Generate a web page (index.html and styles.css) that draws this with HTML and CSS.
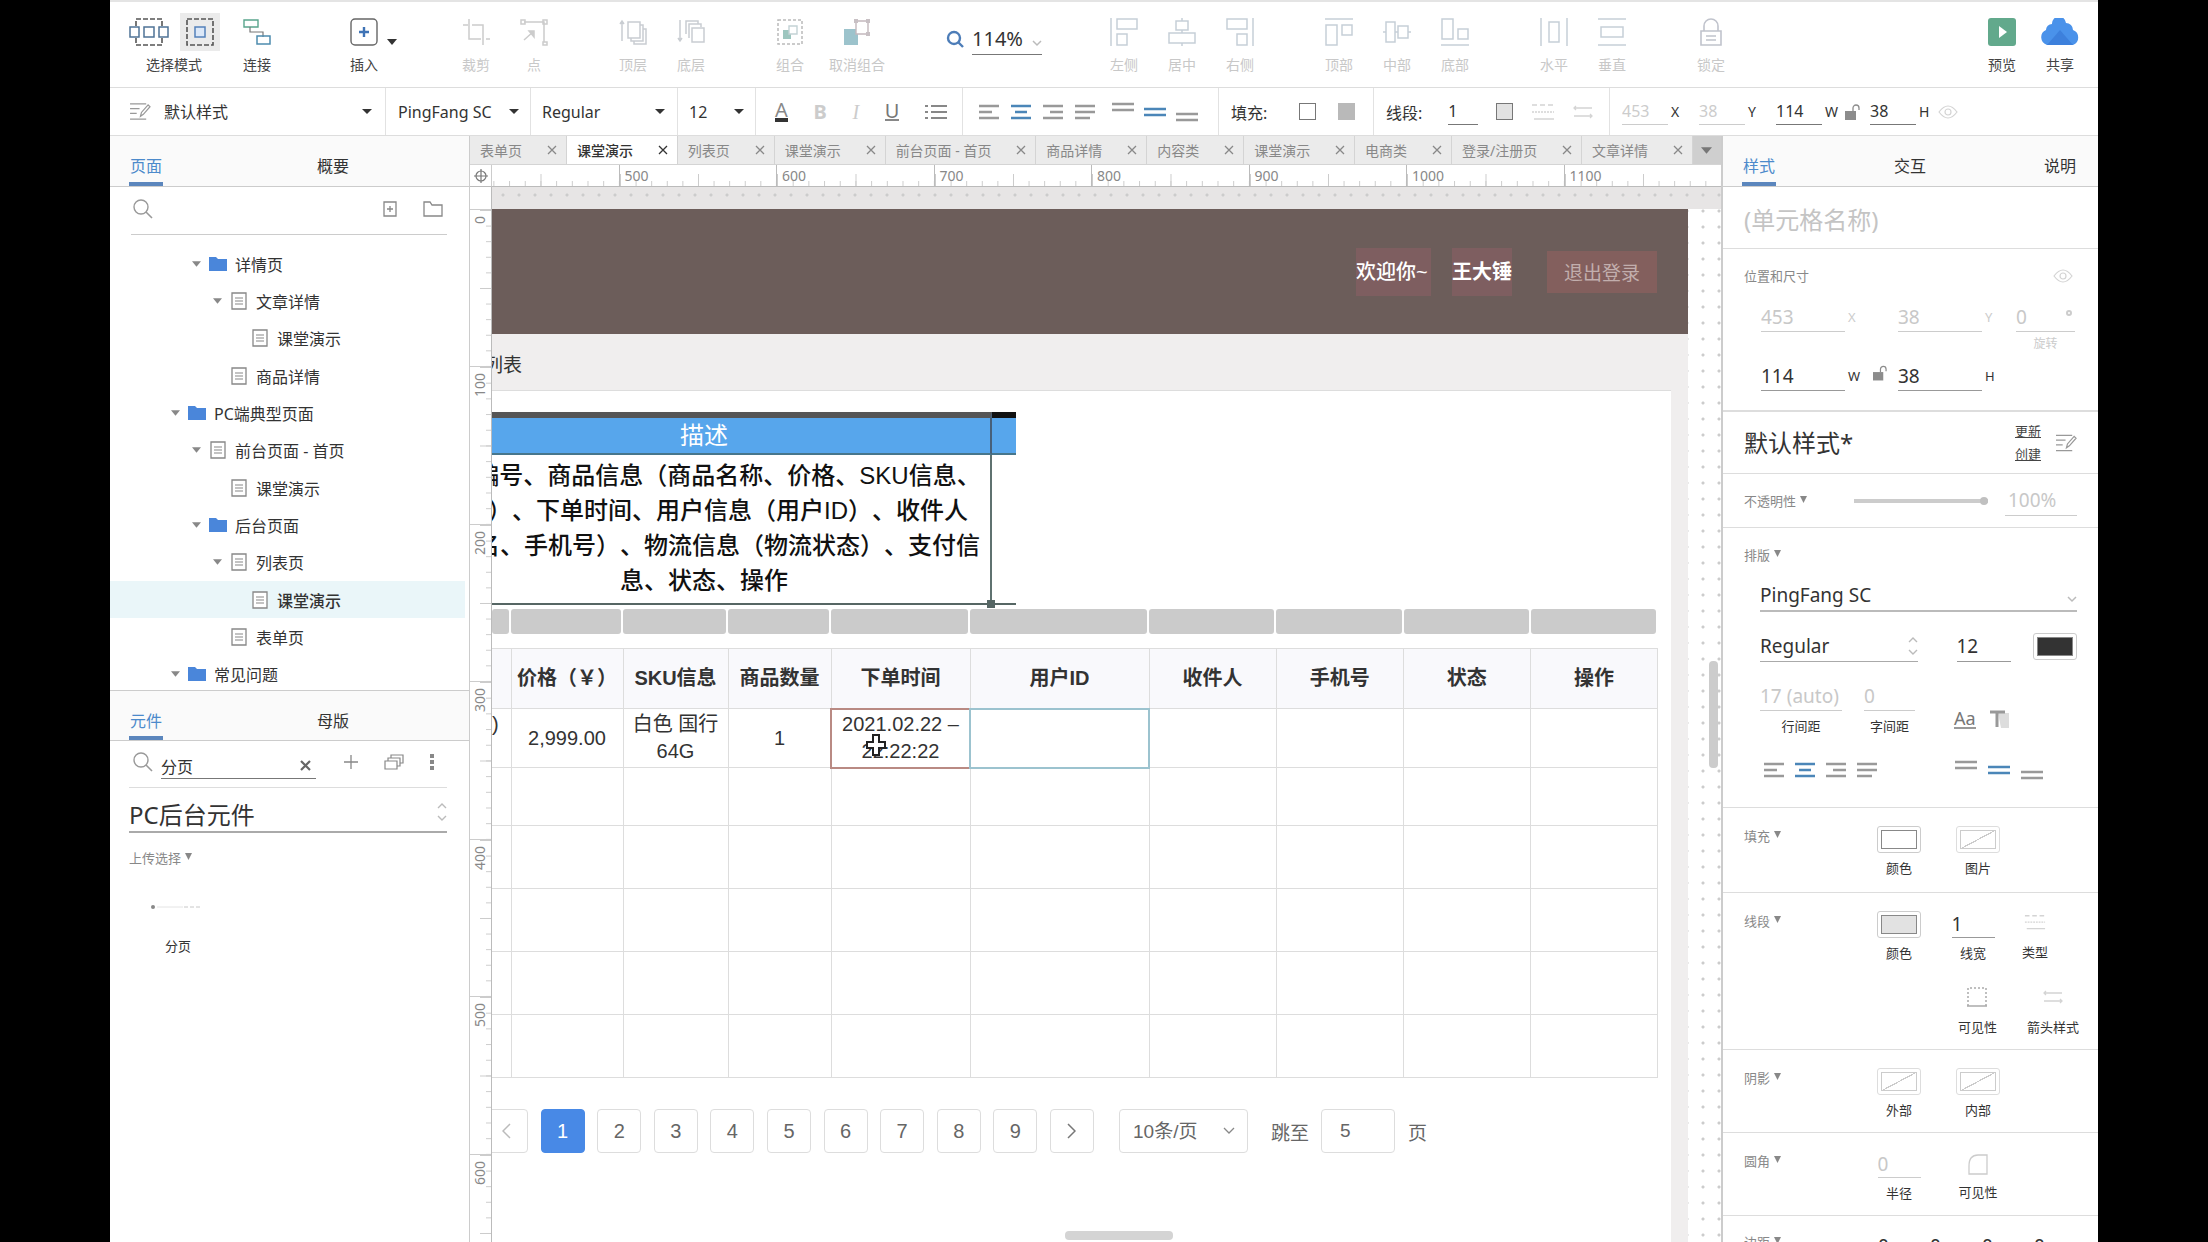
FILE: index.html
```html
<!DOCTYPE html>
<html lang="zh-CN">
<head>
    <meta charset="UTF-8">
    <meta name="viewport" content="width=device-width, initial-scale=1.0">
    <title>课堂演示</title>
    <link rel="stylesheet" href="styles.css">
</head>
<body>
    <!-- Shared icons -->
    <svg class="sprite" aria-hidden="true">
        <symbol id="i-close" viewBox="0 0 10 10"><path d="M1 1l8 8M9 1L1 9" fill="none" stroke="currentColor" stroke-width="1.3"/></symbol>
        <symbol id="i-search" viewBox="0 0 20 20"><circle cx="8" cy="8" r="7" fill="none" stroke="currentColor" stroke-width="1.4"/><path d="M13 13l6 6" stroke="currentColor" stroke-width="1.6"/></symbol>
        <symbol id="i-arrow" viewBox="0 0 10 8"><path d="M0 1h10L5 7z" fill="currentColor"/></symbol>
        <symbol id="i-mini" viewBox="0 0 8 8"><path d="M0 0h8L4 8z" fill="currentColor"/></symbol>
        <symbol id="i-folder" viewBox="0 0 18 16"><path d="M0 1h7l2 2h9v12H0z" fill="#4a86da"/></symbol>
        <symbol id="i-page" viewBox="0 0 16 18"><path d="M1 1h14v16H1z" fill="#fff" stroke="#888" stroke-width="1.3"/><path d="M4 6h8M4 9h8M4 12h8" stroke="#888" stroke-width="1.2"/></symbol>
        <symbol id="i-edit" viewBox="0 0 22 20"><path d="M0 2h17M0 7h10M0 12h7M0 18h17M11 15l1-4 7-8 2 2-7 8z" fill="none" stroke="currentColor" stroke-width="1.3"/></symbol>
        <symbol id="i-left" viewBox="0 0 20 16"><path d="M0 2h20M0 8h13M0 14h20" stroke="currentColor" stroke-width="2.4"/></symbol>
        <symbol id="i-center" viewBox="0 0 20 16"><path d="M0 2h20M4 8h12M0 14h20" stroke="currentColor" stroke-width="2.4"/></symbol>
        <symbol id="i-right" viewBox="0 0 20 16"><path d="M0 2h20M7 8h13M0 14h20" stroke="currentColor" stroke-width="2.4"/></symbol>
        <symbol id="i-justify" viewBox="0 0 20 16"><path d="M0 2h20M0 8h20M0 14h15" stroke="currentColor" stroke-width="2.4"/></symbol>
        <symbol id="i-vtop" viewBox="0 0 22 20"><path d="M0 2h22M0 8h22" stroke="currentColor" stroke-width="2.4"/></symbol>
        <symbol id="i-vmid" viewBox="0 0 22 20"><path d="M0 7h22M0 13h22" stroke="currentColor" stroke-width="2.4"/></symbol>
        <symbol id="i-vbot" viewBox="0 0 22 20"><path d="M0 12h22M0 18h22" stroke="currentColor" stroke-width="2.4"/></symbol>
        <symbol id="i-unlock" viewBox="0 0 15 16"><path d="M0 7h11v9H0z" fill="#8c8c8c"/><path d="M8 7V4a3 3 0 0 1 6 0v2" fill="none" stroke="#8c8c8c" stroke-width="1.3"/></symbol>
        <symbol id="i-eye" viewBox="0 0 20 14"><path d="M1 7q9-12 18 0q-9 12-18 0z" fill="none" stroke="currentColor" stroke-width="1.2"/><circle cx="10" cy="7" r="3" fill="none" stroke="currentColor" stroke-width="1.2"/></symbol>
        <symbol id="i-lines" viewBox="0 0 24 18"><path d="M1 2h22" stroke="currentColor" stroke-width="1.5" stroke-dasharray="5 3"/><path d="M1 9h22" stroke="currentColor" stroke-width="1.5" stroke-dasharray="2 1"/><path d="M3 16h20" stroke="currentColor" stroke-width="1.5"/></symbol>
        <symbol id="i-arrows" viewBox="0 0 20 14"><path d="M1 3h18M1 11h18M3 1L1 3l2 2M17 9l2 2-2 2" fill="none" stroke="currentColor" stroke-width="1.3"/></symbol>
        <symbol id="i-updown" viewBox="0 0 10 18"><path d="M1 5l4-4 4 4M1 13l4 4 4-4" fill="none" stroke="#bbb" stroke-width="1.4"/></symbol>
    </svg>

    <div class="app">
        <header class="toolbar">
            <div class="tool tool-select">
                <div class="tool-pair">
                    <button type="button" class="icon-btn" aria-label="相交选中"><svg width="40" height="28" viewBox="0 0 40 28" fill="none"><path d="M7 8V1h26v7M7 20v7h26v-7" stroke="#555" stroke-width="1.6" stroke-dasharray="5 2"/><path d="M1 9h9v10H1zM15 9h10v10H15zM30 9h9v10h-9z" stroke="#4f7396" stroke-width="1.5"/></svg></button>
                    <button type="button" class="icon-btn is-on" aria-label="包含选中"><svg width="28" height="28" viewBox="0 0 28 28" fill="none"><path d="M1 1h26v26H1z" stroke="#555" stroke-width="1.6" stroke-dasharray="5 2"/><path d="M9 9h10v10H9z" fill="#dce8f8" stroke="#5481bb" stroke-width="1.5"/></svg></button>
                </div>
                <span>选择模式</span>
            </div>
            <button type="button" class="tool tool-link"><svg width="28" height="28" viewBox="0 0 28 28" fill="none"><path d="M1 2h14v7H1z" stroke="#5aa58d" stroke-width="1.4"/><path d="M7 9v5h13v5" stroke="#777" stroke-width="1.2"/><path d="M14 18h13v8H14z" stroke="#4e8cae" stroke-width="1.5"/></svg><span>连接</span></button>
            <button type="button" class="tool tool-insert"><svg width="28" height="28" viewBox="0 0 28 28" fill="none"><rect x="1" y="1" width="26" height="26" rx="4" stroke="#666" stroke-width="1.4"/><path d="M14 9v10M9 14h10" stroke="#3f73b5" stroke-width="2.4"/></svg><span>插入</span><svg class="caret" width="10" height="8"><use href="#i-arrow"/></svg></button>
            <div class="tool-group">
                <button type="button" class="tool" disabled><svg width="28" height="28" viewBox="0 0 28 28" fill="none" stroke="#ccc" stroke-width="1.5"><path d="M7 1v20h12M1 7h5M10 7h11v20M24 21h4"/></svg><span>裁剪</span></button>
                <button type="button" class="tool" disabled><svg width="28" height="28" viewBox="0 0 28 28" fill="none" stroke="#ccc" stroke-width="1.5"><path d="M4 4h20v20M1 2h4v4H1zM23 2h4v4h-4zM23 24h4v3h-4z"/><path d="M4 22l10-9M9 13h5v6z" fill="#ccc"/></svg><span>点</span></button>
            </div>
            <div class="tool-group">
                <button type="button" class="tool" disabled><svg width="28" height="28" viewBox="0 0 28 28" fill="none" stroke="#c9cdd2" stroke-width="1.5"><path d="M3 23V3M1 6l2-3 2 3M9 4h12v16H9zM12 20v3h12V7h-3M15 23v3h12V11h-3"/></svg><span>顶层</span></button>
                <button type="button" class="tool" disabled><svg width="28" height="28" viewBox="0 0 28 28" fill="none" stroke="#c9cdd2" stroke-width="1.5"><path d="M3 2v21M1 20l2 3 2-3M15 10h12v14H15zM12 20V6h12v3M9 16V3h12v3"/></svg><span>底层</span></button>
            </div>
            <div class="tool-group">
                <button type="button" class="tool" disabled><svg width="28" height="28" viewBox="0 0 28 28" fill="none"><path d="M2 2h24v24H2z" stroke="#bbb" stroke-width="1.5" stroke-dasharray="3 2"/><path d="M7 12h8v9H7z" fill="#9dc6bf"/><path d="M13 8h8v8h-8z" fill="#fff" stroke="#c3d2d5" stroke-width="1.4"/></svg><span>组合</span></button>
                <button type="button" class="tool tool-ungroup" disabled><svg width="28" height="28" viewBox="0 0 28 28" fill="none"><path d="M1 11h14v16H1z" fill="#9cc3cc"/><path d="M13 3h12v13H13z" fill="#fff" stroke="#c3b8bd" stroke-width="1.4"/><path d="M11 1h4v4h-4zM23 1h4v4h-4zM23 14h4v4h-4z" fill="#c8c0c4"/></svg><span>取消组合</span></button>
            </div>
            <div class="zoom">
                <svg width="18" height="18" viewBox="0 0 18 18" fill="none" stroke="#4d7db8" stroke-width="2.4"><circle cx="8" cy="8" r="6"/><path d="M12 12l5 5"/></svg>
                <select class="zoom-select" aria-label="缩放"><option>114%</option></select>
            </div>
            <div class="tool-group">
                <button type="button" class="tool" disabled><svg width="28" height="28" viewBox="0 0 28 28" fill="none" stroke="#c6cfd8" stroke-width="1.5"><path d="M1 0v28M7 1h20v10H7zM7 16h10v11H7z"/></svg><span>左侧</span></button>
                <button type="button" class="tool" disabled><svg width="28" height="28" viewBox="0 0 28 28" fill="none" stroke="#c6cfd8" stroke-width="1.5"><path d="M14 0v3M14 12v3M14 25v3M8 3h12v9H8zM1 15h26v10H1z"/></svg><span>居中</span></button>
                <button type="button" class="tool" disabled><svg width="28" height="28" viewBox="0 0 28 28" fill="none" stroke="#c6cfd8" stroke-width="1.5"><path d="M27 0v28M1 1h20v10H1zM11 16h10v11H11z"/></svg><span>右侧</span></button>
            </div>
            <div class="tool-group">
                <button type="button" class="tool" disabled><svg width="28" height="28" viewBox="0 0 28 28" fill="none" stroke="#c6cfd8" stroke-width="1.5"><path d="M0 1h28M1 7h11v20H1zM17 7h10v10H17z"/></svg><span>顶部</span></button>
                <button type="button" class="tool" disabled><svg width="28" height="28" viewBox="0 0 28 28" fill="none" stroke="#c6cfd8" stroke-width="1.5"><path d="M0 14h3M12 14h3M25 14h3M3 4h9v20H3zM15 8h10v12H15z"/></svg><span>中部</span></button>
                <button type="button" class="tool" disabled><svg width="28" height="28" viewBox="0 0 28 28" fill="none" stroke="#c6cfd8" stroke-width="1.5"><path d="M0 27h28M1 1h11v20H1zM17 11h10v10H17z"/></svg><span>底部</span></button>
            </div>
            <div class="tool-group">
                <button type="button" class="tool" disabled><svg width="28" height="28" viewBox="0 0 28 28" fill="none" stroke="#c6cfd8" stroke-width="1.5"><path d="M1 0v28M27 0v28M9 4h10v20H9z"/></svg><span>水平</span></button>
                <button type="button" class="tool" disabled><svg width="28" height="28" viewBox="0 0 28 28" fill="none" stroke="#c6cfd8" stroke-width="1.5"><path d="M0 1h28M0 27h28M3 9h22v10H3z"/></svg><span>垂直</span></button>
            </div>
            <div class="tool-group">
                <button type="button" class="tool" disabled><svg width="28" height="28" viewBox="0 0 28 28" fill="none" stroke="#c0c3cc" stroke-width="1.6"><path d="M4 13h20v14H4zM7 13V8a7 7 0 0 1 14 0v5M9 18h10M9 22h10"/></svg><span>锁定</span></button>
            </div>
            <div class="tool-group tool-end">
                <button type="button" class="tool"><svg width="28" height="28" viewBox="0 0 28 28"><rect width="28" height="28" rx="3" fill="#62a98c"/><path d="M11 8l8 6-8 6z" fill="#fff"/></svg><span>预览</span></button>
                <button type="button" class="tool"><svg width="42" height="28" viewBox="0 0 42 28"><path d="M8 27a8 8 0 0 1-1-15 6 6 0 0 1 6-6 7 7 0 0 1 14-1 7 7 0 0 1 7 7 8 8 0 0 1 0 15z" fill="#4a92ea"/><path d="M8 27l13-15 13 15z" fill="#3d80dc"/></svg><span>共享</span></button>
            </div>
        </header>

        <div class="stylebar">
            <div class="bar-group bar-style">
                <svg class="gray" width="21" height="19"><use href="#i-edit"/></svg>
                <select class="bar-select" aria-label="样式"><option>默认样式</option></select>
            </div>
            <div class="bar-group bar-font"><select class="bar-select" aria-label="字体"><option>PingFang SC</option></select></div>
            <div class="bar-group bar-weight"><select class="bar-select" aria-label="字重"><option>Regular</option></select></div>
            <div class="bar-group bar-size"><select class="bar-select" aria-label="字号"><option>12</option></select></div>
            <div class="bar-group bar-text">
                <button type="button" class="icon-btn glyph-color" aria-label="颜色">A</button>
                <button type="button" class="icon-btn glyph-off" disabled><b>B</b></button>
                <button type="button" class="icon-btn glyph-off" disabled><i>I</i></button>
                <button type="button" class="icon-btn glyph-line">U</button>
                <button type="button" class="icon-btn" aria-label="列表"><svg width="22" height="16" viewBox="0 0 22 16"><path d="M0 2h3M0 8h3M0 14h3M6 2h16M6 8h16M6 14h16" stroke="#888" stroke-width="2.2"/></svg></button>
            </div>
            <div class="bar-group bar-align">
                <button type="button" class="icon-btn" aria-label="左对齐"><svg width="20" height="16"><use href="#i-left"/></svg></button>
                <button type="button" class="icon-btn blue" aria-label="居中"><svg width="20" height="16"><use href="#i-center"/></svg></button>
                <button type="button" class="icon-btn" aria-label="右对齐"><svg width="20" height="16"><use href="#i-right"/></svg></button>
                <button type="button" class="icon-btn" aria-label="两端对齐"><svg width="20" height="16"><use href="#i-justify"/></svg></button>
                <div class="bar-valign">
                    <button type="button" class="icon-btn" aria-label="顶部"><svg width="22" height="20"><use href="#i-vtop"/></svg></button>
                    <button type="button" class="icon-btn blue" aria-label="中部"><svg width="22" height="20"><use href="#i-vmid"/></svg></button>
                    <button type="button" class="icon-btn" aria-label="底部"><svg width="22" height="20"><use href="#i-vbot"/></svg></button>
                </div>
            </div>
            <div class="bar-group bar-fill">
                <span>填充:</span>
                <button type="button" class="chip chip-fill" aria-label="填充颜色"></button>
                <button type="button" class="chip chip-shadow" aria-label="阴影"></button>
            </div>
            <div class="bar-group bar-line">
                <label for="bar-line">线段:</label>
                <input id="bar-line" class="line-input w30" value="1">
                <button type="button" class="chip chip-line" aria-label="线段颜色"></button>
                <button type="button" class="icon-btn faint" aria-label="类型"><svg width="24" height="18"><use href="#i-lines"/></svg></button>
                <button type="button" class="icon-btn faint" aria-label="箭头样式"><svg width="20" height="14"><use href="#i-arrows"/></svg></button>
            </div>
            <div class="bar-group bar-pos">
                <input id="bar-x" class="line-input w46" value="453" disabled><label for="bar-x">X</label>
                <input id="bar-y" class="line-input w46" value="38" disabled><label for="bar-y">Y</label>
                <input id="bar-w" class="line-input w46" value="114"><label for="bar-w">W</label>
                <svg class="bar-lock" width="15" height="16"><use href="#i-unlock"/></svg>
                <input id="bar-h" class="line-input w46" value="38"><label for="bar-h">H</label>
                <svg class="faint" width="20" height="14"><use href="#i-eye"/></svg>
            </div>
        </div>

        <main class="workspace">
            <aside class="side side-left">
                <nav class="panel-tabs">
                    <button type="button" class="panel-tab active">页面</button>
                    <button type="button" class="panel-tab">概要</button>
                </nav>
                <div class="page-search">
                    <svg class="gray" width="20" height="20"><use href="#i-search"/></svg>
                    <button type="button" class="icon-btn push" aria-label="添加页面"><svg width="14" height="16" viewBox="0 0 14 16" fill="none" stroke="#888" stroke-width="1.3"><path d="M1 1h12v14H1zM7 5v6M4 8h6"/></svg></button>
                    <button type="button" class="icon-btn" aria-label="添加文件夹"><svg width="20" height="16" viewBox="0 0 20 16" fill="none" stroke="#888" stroke-width="1.3"><path d="M1 1h6l2 3h10v11H1z"/></svg></button>
                </div>
                <div class="tree-box">
                    <ul class="tree">
                        <li class="lv2"><svg class="twist"><use href="#i-arrow"/></svg><svg class="node"><use href="#i-folder"/></svg>详情页</li>
                        <li class="lv3"><svg class="twist"><use href="#i-arrow"/></svg><svg class="node"><use href="#i-page"/></svg>文章详情</li>
                        <li class="lv4"><i class="twist"></i><svg class="node"><use href="#i-page"/></svg>课堂演示</li>
                        <li class="lv3"><i class="twist"></i><svg class="node"><use href="#i-page"/></svg>商品详情</li>
                        <li class="lv1"><svg class="twist"><use href="#i-arrow"/></svg><svg class="node"><use href="#i-folder"/></svg>PC端典型页面</li>
                        <li class="lv2"><svg class="twist"><use href="#i-arrow"/></svg><svg class="node"><use href="#i-page"/></svg>前台页面 - 首页</li>
                        <li class="lv3"><i class="twist"></i><svg class="node"><use href="#i-page"/></svg>课堂演示</li>
                        <li class="lv2"><svg class="twist"><use href="#i-arrow"/></svg><svg class="node"><use href="#i-folder"/></svg>后台页面</li>
                        <li class="lv3"><svg class="twist"><use href="#i-arrow"/></svg><svg class="node"><use href="#i-page"/></svg>列表页</li>
                        <li class="lv4 selected"><i class="twist"></i><svg class="node"><use href="#i-page"/></svg>课堂演示</li>
                        <li class="lv3"><i class="twist"></i><svg class="node"><use href="#i-page"/></svg>表单页</li>
                        <li class="lv1"><svg class="twist"><use href="#i-arrow"/></svg><svg class="node"><use href="#i-folder"/></svg>常见问题</li>
                    </ul>
                </div>
                <nav class="panel-tabs panel-tabs-lower">
                    <button type="button" class="panel-tab active">元件</button>
                    <button type="button" class="panel-tab">母版</button>
                </nav>
                <div class="lib-search">
                    <svg class="gray" width="20" height="20"><use href="#i-search"/></svg>
                    <div class="lib-query">
                        <input type="text" value="分页" aria-label="搜索元件">
                        <button type="button" class="icon-btn" aria-label="清除"><svg width="11" height="11" viewBox="0 0 11 11"><path d="M1 1l9 9M10 1l-9 9" stroke="#666" stroke-width="2.2"/></svg></button>
                    </div>
                    <div class="lib-actions">
                        <button type="button" class="icon-btn" aria-label="添加"><svg width="14" height="14" viewBox="0 0 14 14"><path d="M7 0v14M0 7h14" stroke="#888" stroke-width="1.3"/></svg></button>
                        <button type="button" class="icon-btn" aria-label="元件库"><svg width="20" height="16" viewBox="0 0 20 16" fill="none" stroke="#888" stroke-width="1.2"><path d="M1 7h12v8H1zM4 7V4h12v8h-3M7 4V1h12v8h-3"/></svg></button>
                        <button type="button" class="icon-btn" aria-label="更多"><svg width="4" height="16" viewBox="0 0 4 16"><path d="M0 0h4v4H0zM0 6h4v4H0zM0 12h4v4H0z" fill="#888"/></svg></button>
                    </div>
                </div>
                <div class="lib-name">
                    <select aria-label="元件库"><option>PC后台元件</option></select>
                    <svg width="10" height="18"><use href="#i-updown"/></svg>
                </div>
                <div class="lib-group">上传选择 <svg class="mini"><use href="#i-mini"/></svg></div>
                <div class="lib-item">
                    <svg width="54" height="6" viewBox="0 0 54 6"><circle cx="2" cy="3" r="2" fill="#888"/><path d="M6 3h26" stroke="#e4e4e4"/><path d="M33 3h18" stroke="#c8c8c8" stroke-dasharray="4 2"/></svg>
                    <span>分页</span>
                </div>
            </aside>

            <section class="editor">
                <div class="doc-tabs">
                    <div class="doc-tab">表单页<svg><use href="#i-close"/></svg></div>
                    <div class="doc-tab current">课堂演示<svg><use href="#i-close"/></svg></div>
                    <div class="doc-tab">列表页<svg><use href="#i-close"/></svg></div>
                    <div class="doc-tab">课堂演示<svg><use href="#i-close"/></svg></div>
                    <div class="doc-tab">前台页面 - 首页<svg><use href="#i-close"/></svg></div>
                    <div class="doc-tab">商品详情<svg><use href="#i-close"/></svg></div>
                    <div class="doc-tab">内容类<svg><use href="#i-close"/></svg></div>
                    <div class="doc-tab">课堂演示<svg><use href="#i-close"/></svg></div>
                    <div class="doc-tab">电商类<svg><use href="#i-close"/></svg></div>
                    <div class="doc-tab">登录/注册页<svg><use href="#i-close"/></svg></div>
                    <div class="doc-tab">文章详情<svg><use href="#i-close"/></svg></div>
                    <button type="button" class="doc-more" aria-label="更多页面"><svg width="11" height="9"><use href="#i-arrow"/></svg></button>
                </div>
                <div class="ruler-corner"><svg width="14" height="14" viewBox="0 0 14 14" fill="none" stroke="#777" stroke-width="1.2"><circle cx="7" cy="7" r="5"/><path d="M7 0v14M0 7h14"/></svg></div>
                <div class="ruler-x">
                    <div class="ruler-x-scale"><span></span><span>500</span><span>600</span><span>700</span><span>800</span><span>900</span><span>1000</span><span>1100</span></div>
                </div>
                <div class="ruler-y">
                    <div class="ruler-y-scale"><div><span>0</span></div><div><span>100</span></div><div><span>200</span></div><div><span>300</span></div><div><span>400</span></div><div><span>500</span></div><div><span>600</span></div></div>
                </div>
                <div class="canvas">
                    <div class="artboard">
                        <div class="site-head">
                            <span class="hello">欢迎你~</span>
                            <strong class="user">王大锤</strong>
                            <button type="button" class="logout">退出登录</button>
                        </div>
                        <div class="crumb">列表</div>
                        <div class="sheet">
                            <div class="spec">
                                <table class="spec-table">
                                    <tr><th>描述</th><th class="spec-next"></th></tr>
                                    <tr><td>订单编号、商品信息（商品名称、价格、SKU信息、<br>数量）、下单时间、用户信息（用户ID）、收件人<br>（姓名、手机号）、物流信息（物流状态）、支付信<br>息、状态、操作</td><td class="spec-next"></td></tr>
                                </table>
                                <i class="spec-handle"></i>
                            </div>
                            <div class="col-handles"><i></i><i></i><i></i><i></i><i></i><i></i><i></i><i></i><i></i><i></i></div>
                            <div class="orders-box">
                                <table class="orders">
                                    <colgroup><col class="c-edge"><col class="c-price"><col class="c-sku"><col class="c-count"><col class="c-time"><col class="c-user"><col><col><col><col></colgroup>
                                    <thead>
                                        <tr><th></th><th>价格（￥）</th><th>SKU信息</th><th>商品数量</th><th>下单时间</th><th>用户ID</th><th>收件人</th><th>手机号</th><th>状态</th><th>操作</th></tr>
                                    </thead>
                                    <tbody>
                                        <tr class="first"><td class="edge">)</td><td>2,999.00</td><td>白色 国行<br>64G</td><td>1</td><td class="cell-hover">2021.02.22 –<br>22:22:22</td><td class="cell-picked"></td><td></td><td></td><td></td><td></td></tr>
                                        <tr class="second"><td></td><td></td><td></td><td></td><td></td><td></td><td></td><td></td><td></td><td></td></tr>
                                        <tr><td></td><td></td><td></td><td></td><td></td><td></td><td></td><td></td><td></td><td></td></tr>
                                        <tr><td></td><td></td><td></td><td></td><td></td><td></td><td></td><td></td><td></td><td></td></tr>
                                        <tr><td></td><td></td><td></td><td></td><td></td><td></td><td></td><td></td><td></td><td></td></tr>
                                        <tr><td></td><td></td><td></td><td></td><td></td><td></td><td></td><td></td><td></td><td></td></tr>
                                    </tbody>
                                </table>
                                <svg class="cursor" width="22" height="24" viewBox="0 0 22 24"><path d="M8 2h6v7h6v6h-6v7H8v-7H2V9h6z" fill="#fff" stroke="#222" stroke-width="2"/></svg>
                            </div>
                            <div class="pager">
                                <div class="pager-pages">
                                    <button type="button" aria-label="上一页"><svg width="9" height="16" viewBox="0 0 9 16" fill="none" stroke="#bbb" stroke-width="1.5"><path d="M8 1L1 8l7 7"/></svg></button>
                                    <button type="button" class="on">1</button>
                                    <button type="button">2</button>
                                    <button type="button">3</button>
                                    <button type="button">4</button>
                                    <button type="button">5</button>
                                    <button type="button">6</button>
                                    <button type="button">7</button>
                                    <button type="button">8</button>
                                    <button type="button">9</button>
                                    <button type="button" aria-label="下一页"><svg width="9" height="16" viewBox="0 0 9 16" fill="none" stroke="#777" stroke-width="1.5"><path d="M1 1l7 7-7 7"/></svg></button>
                                </div>
                                <select class="pager-size" aria-label="每页条数"><option>10条/页</option></select>
                                <label for="jump">跳至</label>
                                <input id="jump" class="pager-jump" value="5">
                                <span>页</span>
                            </div>
                        </div>
                    </div>
                    <i class="scroll-y"></i>
                    <i class="scroll-x"></i>
                </div>
            </section>

            <aside class="side side-right">
                <nav class="panel-tabs">
                    <button type="button" class="panel-tab active">样式</button>
                    <button type="button" class="panel-tab">交互</button>
                    <button type="button" class="panel-tab">说明</button>
                </nav>
                <div class="prop prop-name"><input type="text" placeholder="(单元格名称)" aria-label="单元格名称"></div>
                <div class="prop prop-place">
                    <div class="place-title"><span class="prop-title">位置和尺寸</span><svg class="faint" width="20" height="14"><use href="#i-eye"/></svg></div>
                    <div class="place-row off">
                        <input id="p-x" value="453" disabled><label for="p-x">X</label>
                        <input id="p-y" value="38" disabled><label for="p-y">Y</label>
                        <div class="rotate"><input id="p-r" value="0" disabled><label for="p-r">旋转</label><i></i></div>
                    </div>
                    <div class="place-row">
                        <input id="p-w" value="114"><label for="p-w">W</label>
                        <input id="p-h" value="38"><label for="p-h">H</label>
                        <svg class="place-lock" width="14" height="16"><use href="#i-unlock"/></svg>
                    </div>
                </div>
                <div class="prop prop-style">
                    <h2>默认样式*</h2>
                    <div class="style-links"><a href="#">更新</a><a href="#">创建</a></div>
                    <svg class="gray" width="21" height="20"><use href="#i-edit"/></svg>
                </div>
                <div class="prop prop-opacity">
                    <label class="prop-title" for="opacity">不透明性 <svg class="mini"><use href="#i-mini"/></svg></label>
                    <input id="opacity" class="slider" type="range" value="100" disabled>
                    <input class="num" value="100%" aria-label="不透明性" disabled>
                </div>
                <div class="prop prop-type">
                    <span class="prop-title">排版 <svg class="mini"><use href="#i-mini"/></svg></span>
                    <select class="type-font" aria-label="字体"><option>PingFang SC</option></select>
                    <div class="type-row">
                        <div class="type-weight"><select aria-label="字重"><option>Regular</option></select><svg width="10" height="18"><use href="#i-updown"/></svg></div>
                        <input class="type-size" value="12" aria-label="字号">
                        <button type="button" class="swatch dark" aria-label="文字颜色"><i></i></button>
                    </div>
                    <div class="type-row type-space">
                        <div class="type-lead"><input id="lead" value="17 (auto)" disabled><label for="lead">行间距</label></div>
                        <div class="type-track"><input id="track" value="0" disabled><label for="track">字间距</label></div>
                        <button type="button" class="icon-btn case">Aa</button>
                        <button type="button" class="icon-btn" aria-label="文字阴影"><svg width="22" height="20" viewBox="0 0 22 20"><path d="M9 4h11v15h-8z" fill="#ddd"/><path d="M1 3h15M8 3v15" stroke="#999" stroke-width="3"/></svg></button>
                    </div>
                    <div class="type-align">
                        <button type="button" class="icon-btn" aria-label="左对齐"><svg width="20" height="16"><use href="#i-left"/></svg></button>
                        <button type="button" class="icon-btn blue" aria-label="居中"><svg width="20" height="16"><use href="#i-center"/></svg></button>
                        <button type="button" class="icon-btn" aria-label="右对齐"><svg width="20" height="16"><use href="#i-right"/></svg></button>
                        <button type="button" class="icon-btn" aria-label="两端对齐"><svg width="20" height="16"><use href="#i-justify"/></svg></button>
                        <button type="button" class="icon-btn push" aria-label="顶部"><svg width="22" height="20"><use href="#i-vtop"/></svg></button>
                        <button type="button" class="icon-btn blue" aria-label="中部"><svg width="22" height="20"><use href="#i-vmid"/></svg></button>
                        <button type="button" class="icon-btn" aria-label="底部"><svg width="22" height="20"><use href="#i-vbot"/></svg></button>
                    </div>
                </div>
                <div class="prop prop-grid">
                    <span class="prop-title">填充 <svg class="mini"><use href="#i-mini"/></svg></span>
                    <div class="prop-cell"><button type="button" class="swatch" aria-label="颜色"><i></i></button>颜色</div>
                    <div class="prop-cell"><button type="button" class="swatch empty" aria-label="图片"><i></i></button>图片</div>
                </div>
                <div class="prop prop-grid prop-line">
                    <span class="prop-title">线段 <svg class="mini"><use href="#i-mini"/></svg></span>
                    <div class="prop-cell"><button type="button" class="swatch light" aria-label="颜色"><i></i></button>颜色</div>
                    <div class="prop-cell"><input id="line-w" value="1"><label for="line-w">线宽</label></div>
                    <div class="prop-cell narrow"><svg class="faint" width="22" height="26" viewBox="0 0 24 26"><use href="#i-lines" y="2" width="24" height="18"/></svg>类型</div>
                    <div class="line-more">
                        <div class="prop-cell"><svg width="20" height="22" viewBox="0 0 20 22" fill="none" stroke="#aaa" stroke-width="1.5"><path d="M1 20V2h18v18" stroke-dasharray="2 2"/><path d="M0 20h20"/></svg>可见性</div>
                        <div class="prop-cell"><svg class="faint" width="20" height="22"><use href="#i-arrows"/></svg>箭头样式</div>
                    </div>
                </div>
                <div class="prop prop-grid">
                    <span class="prop-title">阴影 <svg class="mini"><use href="#i-mini"/></svg></span>
                    <div class="prop-cell"><button type="button" class="swatch empty" aria-label="外部"><i></i></button>外部</div>
                    <div class="prop-cell"><button type="button" class="swatch empty" aria-label="内部"><i></i></button>内部</div>
                </div>
                <div class="prop prop-grid">
                    <span class="prop-title">圆角 <svg class="mini"><use href="#i-mini"/></svg></span>
                    <div class="prop-cell"><input id="radius" value="0" disabled><label for="radius">半径</label></div>
                    <div class="prop-cell"><svg width="20" height="26" viewBox="0 0 20 26" fill="none" stroke="#ccc" stroke-width="1.3"><path d="M1 23V15Q1 4 10 4h9v19z"/></svg>可见性</div>
                </div>
                <div class="prop prop-margin">
                    <span class="prop-title">边距 <svg class="mini"><use href="#i-mini"/></svg></span>
                    <input value="0" aria-label="左边距"><input value="0" aria-label="上边距"><input value="0" aria-label="右边距"><input value="0" aria-label="下边距">
                </div>
            </aside>
        </main>
    </div>
</body>
</html>
```
FILE: styles.css
```css
* {
    box-sizing: border-box;
}
body {
    margin: 0;
    background: #000;
    color: #333;
    font-family: "Noto Sans", "Noto Sans CJK SC", sans-serif;
    font-size: 16px;
}
button, input, select {
    font: inherit;
    color: inherit;
    background: none;
    border: 0;
    border-radius: 0;
    padding: 0;
    margin: 0;
    appearance: none;
    outline: none;
}
input {
    min-width: 0;
}
svg {
    display: block;
    flex: none;
}
.sprite {
    position: absolute;
    width: 0;
    height: 0;
}
.app {
    margin: 0 110px;
    height: 100vh;
    background: #fff;
    overflow: hidden;
    display: flex;
    flex-direction: column;
}
.icon-btn {
    display: flex;
    align-items: center;
    justify-content: center;
    color: #999;
}
.blue {
    color: #4b86b8;
}
.gray {
    color: #999;
}
.faint {
    color: #d4d4d4;
}
.push {
    margin-left: auto;
}
.mini {
    display: inline-block;
    width: 7px;
    height: 7px;
    margin: 0 0 3px 1px;
    color: #888;
}

/* Toolbar */
.toolbar {
    display: flex;
    flex: none;
    height: 88px;
    padding: 0 9px 0 18px;
    border-top: 2px solid #e4e4e4;
    border-bottom: 1px solid #ddd;
}
.tool-group {
    display: flex;
    margin-left: 41px;
}
.tool {
    width: 58px;
    padding-top: 16px;
    display: flex;
    flex-direction: column;
    align-items: center;
    gap: 8px;
    font-size: 14px;
    line-height: 22px;
    color: #444;
    white-space: nowrap;
}
.tool:disabled {
    color: #c8c8c8;
}
.tool-select {
    width: 92px;
    padding-top: 11px;
    gap: 3px;
}
.tool-pair {
    display: flex;
    gap: 11px;
}
.tool-pair .is-on {
    width: 40px;
    height: 38px;
    background: #ebebeb;
}
.tool-link {
    margin-left: 8px;
}
.tool-insert {
    position: relative;
    margin: 0 13px 0 49px;
}
.caret {
    position: absolute;
    right: -4px;
    top: 36px;
    color: #333;
}
.tool-ungroup {
    margin-left: 9px;
}
.zoom {
    display: flex;
    align-items: center;
    gap: 8px;
    height: 32px;
    margin: 21px 12px 0 60px;
}
.zoom-select {
    width: 70px;
    height: 32px;
    font-size: 20px;
    border-bottom: 1px solid #777;
    background: url("data:image/svg+xml,%3Csvg xmlns='http://www.w3.org/2000/svg' width='10' height='7'%3E%3Cpath d='M1 1l4 4 4-4' fill='none' stroke='%23bbb' stroke-width='1.5'/%3E%3C/svg%3E") no-repeat right 70%;
}
.tool-end {
    margin-left: auto;
}

/* Style bar */
.stylebar {
    display: flex;
    flex: none;
    height: 48px;
    border-bottom: 1px solid #ddd;
}
.bar-group {
    display: flex;
    align-items: center;
    border-right: 1px solid #e2e2e2;
}
.bar-group:last-child {
    border-right: 0;
}
.bar-select {
    flex: 1;
    height: 30px;
    background: url("data:image/svg+xml,%3Csvg xmlns='http://www.w3.org/2000/svg' width='10' height='7'%3E%3Cpath d='M0 1h10L5 6z' fill='%23333'/%3E%3C/svg%3E") no-repeat right center;
}
.bar-style {
    width: 276px;
    gap: 13px;
    padding: 0 13px 0 20px;
}
.bar-font {
    width: 145px;
    padding: 0 11px 0 12px;
}
.bar-weight {
    width: 147px;
    padding: 0 12px 0 11px;
}
.bar-size {
    width: 78px;
    padding: 0 11px 0 11px;
}
.bar-text {
    width: 207px;
    padding: 0 15px 0 19px;
    justify-content: space-between;
    font-size: 20px;
    line-height: 20px;
}
.glyph-color {
    border-bottom: 4px solid #333;
    line-height: 17px;
    color: #888;
}
.glyph-off {
    color: #ccc;
}
.glyph-off i {
    font-family: "Liberation Serif", serif;
}
.glyph-line {
    border-bottom: 2px solid #888;
    line-height: 17px;
    color: #777;
}
.bar-align {
    width: 256px;
    padding: 0 20px 0 16px;
    justify-content: space-between;
}
.bar-valign {
    display: flex;
    gap: 10px;
    margin-left: 5px;
}
.bar-fill {
    width: 155px;
    padding: 0 17px 0 12px;
    gap: 22px;
}
.bar-fill span {
    margin-right: 10px;
}
.chip {
    width: 17px;
    height: 17px;
}
.chip-fill {
    border: 1px solid #777;
}
.chip-shadow {
    background: #b9b9b9;
}
.chip-line {
    border: 1px solid #777;
    background: #e2e2e2;
}
.bar-line {
    width: 236px;
    padding: 0 16px 0 12px;
    justify-content: space-between;
}
.bar-line label {
    margin-right: 8px;
}
.line-input {
    height: 26px;
    border-bottom: 1px solid #777;
}
.line-input:disabled {
    color: #ccc;
    border-color: #ccc;
}
.w30 {
    width: 30px;
}
.w46 {
    width: 46px;
}
.bar-pos {
    padding-left: 12px;
}
.bar-pos label {
    width: 31px;
    padding-left: 3px;
    font-size: 14px;
}
.bar-pos .bar-lock {
    margin: 0 10px 0 -8px;
}
.bar-pos label:last-of-type {
    width: 22px;
}

/* Workspace */
.workspace {
    flex: 1;
    min-height: 0;
    display: grid;
    grid-template-columns: 359px minmax(0, 1fr) 375px;
}
.side {
    min-height: 0;
    overflow: hidden;
}
.panel-tabs {
    display: flex;
    gap: 154px;
    height: 51px;
    padding-left: 19px;
    background: #fafafa;
    border-bottom: 1px solid #ccc;
}
.panel-tabs-lower {
    border-top: 1px solid #ccc;
}
.panel-tab {
    padding-top: 20px;
    line-height: 20px;
    display: flex;
    flex-direction: column;
    justify-content: space-between;
}
.panel-tab.active {
    color: #4c8acb;
}
.panel-tab.active::after {
    content: "";
    width: 34px;
    height: 4px;
    background: #5b86bd;
}
.page-search {
    display: flex;
    align-items: center;
    gap: 26px;
    height: 48px;
    margin: 0 22px 0 21px;
    padding: 0 4px 4px 2px;
    border-bottom: 1px solid #ccc;
}
.tree-box {
    height: 455px;
    overflow: hidden;
}
.tree {
    list-style: none;
    margin: 0;
    padding: 10px 0 0;
    height: 458px;
    display: grid;
    grid-template-rows: repeat(12, 1fr);
}
.tree li {
    display: flex;
    align-items: center;
    white-space: nowrap;
}
.twist {
    width: 9px;
    height: 8px;
    margin-right: 8px;
    color: #888;
}
.node {
    width: 18px;
    height: 18px;
    margin-right: 8px;
}
.lv1 { padding-left: 61px; }
.lv2 { padding-left: 82px; }
.lv3 { padding-left: 103px; }
.lv4 { padding-left: 124px; }
.tree .selected {
    background: #eaf6f9;
    font-weight: 500;
    margin-right: 4px;
}
.lib-search {
    display: flex;
    align-items: center;
    height: 47px;
    margin: 0 22px 0 19px;
    padding: 0 0 4px 4px;
    border-bottom: 1px solid #ddd;
}
.lib-query {
    display: flex;
    width: 155px;
    height: 26px;
    margin: 8px 28px 0 8px;
    padding-right: 5px;
    border-bottom: 1px solid #777;
}
.lib-query input {
    flex: 1;
}
.lib-actions {
    display: flex;
    align-items: center;
    gap: 26px;
}
.lib-name {
    display: flex;
    align-items: center;
    height: 40px;
    margin: 5px 22px 0 19px;
    border-bottom: 2px solid #aaa;
}
.lib-name select {
    flex: 1;
    height: 34px;
    margin-top: 4px;
    font-size: 24px;
}
.lib-group {
    padding: 14px 19px 0;
    font-size: 13px;
    line-height: 22px;
    color: #888;
}
.lib-item {
    display: flex;
    flex-direction: column;
    align-items: center;
    gap: 26px;
    width: 88px;
    margin: 35px 0 0 24px;
    font-size: 13px;
    line-height: 20px;
}

/* Editor */
.editor {
    min-width: 0;
    min-height: 0;
    display: grid;
    grid-template-columns: 22px minmax(0, 1fr);
    grid-template-rows: 29px 22px minmax(0, 1fr);
    border-left: 1px solid #ccc;
    border-right: 2px solid #ccc;
    overflow: hidden;
}
.doc-tabs {
    grid-column: 1 / 3;
    display: flex;
    background: #ebebeb;
    border-bottom: 1px solid #d4d4d4;
}
.doc-tab {
    flex: 1 1 auto;
    display: flex;
    align-items: center;
    justify-content: space-between;
    padding: 0 9px 0 10px;
    border-right: 1px solid #d4d4d4;
    font-size: 14px;
    color: #888;
    white-space: nowrap;
}
.doc-tab svg {
    width: 10px;
    height: 10px;
}
.doc-tab.current {
    background: #fff;
    color: #333;
    font-weight: 500;
}
.doc-more {
    flex: 0 0 28px;
    display: flex;
    align-items: center;
    justify-content: center;
    background: #cfcfcf;
    color: #777;
}
.ruler-corner {
    display: flex;
    align-items: center;
    justify-content: center;
    border-right: 1px solid #ccc;
    border-bottom: 1px solid #bbb;
}
.ruler-x {
    overflow: hidden;
    border-bottom: 1px solid #bbb;
}
.ruler-x-scale {
    display: grid;
    grid-template-columns: repeat(8, 1fr);
    height: 21px;
    margin-left: -31px;
}
.ruler-x-scale span {
    padding-left: 5px;
    border-left: 1px solid #bbb;
    font-size: 14px;
    line-height: 21px;
    color: #888;
    background-image: linear-gradient(to right, #ccc 1px, transparent 1px), linear-gradient(to right, #ccc 1px, transparent 1px);
    background-size: 10% 5px, 50% 12px;
    background-position: left bottom;
    background-repeat: repeat-x;
}
.ruler-y {
    overflow: hidden;
    padding-top: 22px;
    border-right: 1px solid #bbb;
    background: #fff;
}
.ruler-y-scale {
    display: grid;
    grid-template-rows: repeat(7, 1fr);
    height: 1102px;
}
.ruler-y-scale div {
    padding-top: 6px;
    border-top: 1px solid #ccc;
    background-image: linear-gradient(to bottom, #ccc 1px, transparent 1px), linear-gradient(to bottom, #ccc 1px, transparent 1px);
    background-size: 5px 10%, 11px 50%;
    background-position: right top;
    background-repeat: repeat-y;
}
.ruler-y-scale span {
    display: block;
    width: 19px;
    writing-mode: vertical-rl;
    transform: rotate(180deg);
    text-align: right;
    font-size: 14px;
    line-height: 19px;
    color: #888;
}
.canvas {
    position: relative;
    min-height: 0;
    padding-top: 22px;
    overflow: hidden;
    font-family: "Liberation Sans", "Noto Sans CJK SC", sans-serif;
    font-size: 20px;
    text-spacing-trim: space-all;
    background-color: #fff;
    background-image: radial-gradient(circle, #ccc 1px, transparent 2px), linear-gradient(#e7e5e5 22px, transparent 22px);
    background-size: 16px 16px, 100% 100%;
    background-position: 3px 0, 0 0;
    background-repeat: repeat, no-repeat;
}
.artboard {
    margin-right: 33px;
    background: #f0eeee;
}
.site-head {
    display: flex;
    align-items: center;
    justify-content: flex-end;
    height: 125px;
    padding: 0 31px 0 0;
    background: #6c5d5a;
    color: #fff;
}
.hello, .user {
    line-height: 48px;
    background: #7e5e60;
}
.hello {
    width: 75px;
    font-weight: 500;
    white-space: nowrap;
}
.user {
    margin: 0 35px 0 21px;
}
.logout {
    width: 110px;
    height: 42px;
    font-size: 19px;
    background: #835f5d;
    color: #c2aead;
}
.crumb {
    height: 56px;
    margin-left: -8px;
    font-size: 19px;
    line-height: 64px;
}
.sheet {
    min-height: 900px;
    margin-right: 17px;
    padding: 21px 13px 0 0;
    background: #fff;
    border-top: 1px solid #ddd;
}
.spec {
    position: relative;
    width: 598px;
    margin-left: -74px;
}
.spec-table {
    width: 100%;
    table-layout: fixed;
    border-collapse: separate;
    border-spacing: 0;
    font-size: 24px;
    line-height: 35px;
    text-align: center;
    white-space: nowrap;
    color: #111;
}
.spec-table th {
    height: 43px;
    padding: 0;
    background: #57a6ec;
    border-top: 6px solid #565656;
    border-bottom: 2px solid #47768c;
    border-right: 2px solid #47607a;
    color: #fff;
    font-weight: 400;
}
.spec-table td {
    height: 150px;
    padding: 0 0 2px;
    border-right: 2px solid #5f7270;
    border-bottom: 2px solid #566664;
    font-weight: 500;
}
.spec-table .spec-next {
    width: 24px;
    border-right: 0;
}
.spec-table th.spec-next {
    border-top-color: #111;
}
.spec-handle {
    position: absolute;
    right: 21px;
    bottom: -3px;
    width: 8px;
    height: 8px;
    background: #566664;
}
.col-handles {
    display: grid;
    grid-template-columns: 19px 112px 105px 103px 139px 179px repeat(4, 1fr);
    height: 25px;
    margin-top: 4px;
}
.col-handles i {
    margin-right: 2px;
    background: #cbcbcb;
    border-radius: 3px;
}
.orders-box {
    position: relative;
    margin-top: 14px;
}
.orders {
    width: 100%;
    table-layout: fixed;
    border-collapse: collapse;
    line-height: 27px;
    text-align: center;
}
.c-edge { width: 19px; }
.c-price { width: 112px; }
.c-sku { width: 105px; }
.c-count { width: 103px; }
.c-time { width: 139px; }
.c-user { width: 179px; }
.orders th, .orders td {
    height: 63px;
    padding: 0;
    border: 1px solid #ddd;
    white-space: nowrap;
}
.orders th {
    height: 60px;
    background: #f9f9fc;
    font-weight: 600;
}
.orders .first td {
    height: 59px;
}
.orders .second td {
    height: 58px;
}
.orders th:first-child, .orders td:first-child {
    border-left: 0;
}
.orders .edge {
    padding-bottom: 28px;
    text-align: left;
}
.orders .cell-hover {
    outline: 2px solid #b98a83;
    outline-offset: -1px;
}
.orders .cell-picked {
    outline: 2px solid #9cc3cf;
    outline-offset: -1px;
}
.cursor {
    position: absolute;
    left: 373px;
    top: 85px;
}
.pager {
    display: flex;
    align-items: center;
    margin: 31px 0 0 -8px;
    color: #666;
    font-size: 19px;
}
.pager-pages {
    display: flex;
    justify-content: space-between;
    width: 610px;
}
.pager-pages button {
    width: 44px;
    height: 44px;
    display: flex;
    align-items: center;
    justify-content: center;
    border: 1px solid #ddd;
    border-radius: 4px;
    font-size: 20px;
}
.pager-pages .on {
    background: #4889e6;
    border-color: #4889e6;
    color: #fff;
}
.pager-size {
    width: 129px;
    height: 44px;
    margin: 0 23px 0 25px;
    padding-left: 13px;
    border: 1px solid #ddd;
    border-radius: 4px;
    background: url("data:image/svg+xml,%3Csvg xmlns='http://www.w3.org/2000/svg' width='13' height='8'%3E%3Cpath d='M1 1l5 5 5-5' fill='none' stroke='%23888' stroke-width='1.3'/%3E%3C/svg%3E") no-repeat right 11px center;
}
.pager-jump {
    width: 74px;
    height: 44px;
    margin: 0 13px 0 12px;
    padding-left: 18px;
    border: 1px solid #ddd;
    border-radius: 4px;
}
.scroll-y {
    position: absolute;
    right: 3px;
    top: 474px;
    width: 9px;
    height: 107px;
    border-radius: 4px;
    background: #ccc;
}
.scroll-x {
    position: absolute;
    left: 573px;
    bottom: 2px;
    width: 108px;
    height: 9px;
    border-radius: 4px;
    background: #d4d4d4;
}

/* Properties */
.side-right .panel-tabs {
    gap: 0;
    justify-content: space-between;
    padding: 0 22px 0 19px;
}
.prop {
    padding: 0 21px;
    border-bottom: 1px solid #ddd;
    font-size: 13px;
    line-height: 18px;
}
.prop input, .prop select {
    height: 30px;
    font-size: 19px;
    line-height: 28px;
    border-bottom: 1px solid #999;
}
.prop input:disabled {
    color: #c8c8c8;
    border-color: #ccc;
}
.prop-title {
    color: #888;
    white-space: nowrap;
}
.prop-name {
    padding-top: 14px;
    height: 62px;
}
.prop-name input[type="text"] {
    width: 100%;
    height: 36px;
    border: 0;
    font-size: 24px;
}
.prop-name input::placeholder {
    color: #c4c4c4;
}
.prop-place {
    height: 163px;
    padding-top: 18px;
    border-bottom: 2px solid #ddd;
}
.place-title {
    display: flex;
    align-items: center;
    justify-content: space-between;
    padding-right: 4px;
}
.place-row {
    position: relative;
    display: flex;
    align-items: center;
    height: 30px;
    margin: 17px 0 29px 17px;
}
.place-row > input {
    width: 84px;
}
.place-row > label {
    width: 53px;
    padding-left: 3px;
}
.off {
    color: #ccc;
}
.off > label:last-of-type {
    width: 34px;
}
.rotate {
    position: relative;
    width: 59px;
    height: 30px;
    text-align: center;
}
.rotate input {
    display: block;
    width: 100%;
}
.rotate label {
    display: block;
    padding-top: 3px;
    font-size: 12px;
}
.rotate i {
    position: absolute;
    right: 3px;
    top: 8px;
    width: 6px;
    height: 6px;
    border: 2px solid #ccc;
    border-radius: 50%;
}
.place-lock {
    position: absolute;
    left: 112px;
    top: 4px;
}
.prop-style {
    display: flex;
    align-items: center;
    height: 62px;
}
.prop-style h2 {
    margin: 0 auto 0 0;
    font-size: 24px;
    font-weight: 400;
    line-height: 32px;
}
.style-links {
    display: flex;
    flex-direction: column;
    gap: 5px;
    margin-right: 15px;
}
.style-links a {
    color: #444;
}
.prop-opacity {
    display: flex;
    align-items: center;
    height: 54px;
}
.slider {
    width: 134px;
    margin: 0 17px 0 auto;
}
.prop .slider {
    height: 12px;
    border: 0;
}
.slider::-webkit-slider-runnable-track {
    height: 4px;
    background: #ccc;
}
.slider::-webkit-slider-thumb {
    appearance: none;
    width: 8px;
    height: 8px;
    margin-top: -2px;
    border-radius: 50%;
    background: #c0c0c0;
}
.prop-opacity .num {
    width: 72px;
    padding-left: 3px;
}
.prop-type {
    height: 280px;
    padding-top: 18px;
}
.type-font, .type-row, .type-align {
    margin-left: 16px;
}
.prop-type .type-font {
    display: block;
    width: calc(100% - 16px);
    margin-top: 16px;
    height: 32px;
    border-bottom: 2px solid #bbb;
    background: url("data:image/svg+xml,%3Csvg xmlns='http://www.w3.org/2000/svg' width='10' height='7'%3E%3Cpath d='M1 1l4 4 4-4' fill='none' stroke='%23bbb' stroke-width='1.5'/%3E%3C/svg%3E") no-repeat right 70%;
}
.type-row {
    display: flex;
    justify-content: space-between;
    align-items: center;
    margin-top: 19px;
}
.type-weight {
    display: flex;
    align-items: center;
    width: 158px;
    border-bottom: 1px solid #aaa;
}
.prop .type-weight select {
    flex: 1;
    border: 0;
}
.type-size {
    width: 54px;
    margin: 0 -16px 0 0;
}
.swatch {
    display: block;
    width: 44px;
    height: 27px;
    padding: 3px;
    border: 1px solid #ccc;
    border-radius: 3px;
}
.swatch i {
    display: block;
    height: 19px;
    border: 1px solid #888;
}
.swatch.dark i {
    background: #333;
}
.swatch.light i {
    background: #e2e2e2;
}
.swatch.empty {
    border-color: #ddd;
}
.swatch.empty i {
    border-color: #ccc;
    background: linear-gradient(152deg, transparent 48%, #ccc 48%, #ccc 52%, transparent 52%);
}
.type-space {
    justify-content: flex-start;
}
.type-space div {
    display: flex;
    flex-direction: column;
    text-align: center;
    gap: 6px;
}
.type-space .icon-btn {
    margin: 22px 13px 0 0;
}
.type-lead {
    width: 82px;
    margin-right: 22px;
}
.type-track {
    width: 51px;
    margin-right: 39px;
}
.case {
    font-size: 18px;
    line-height: 18px;
    border-bottom: 2px solid #999;
    color: #777;
}
.type-align {
    display: flex;
    gap: 11px;
    padding: 25px 34px 0 4px;
}
.prop-grid {
    display: flex;
    flex-wrap: wrap;
    height: 83px;
    padding-top: 18px;
}
.prop-grid .prop-title {
    width: 123px;
    padding-top: 1px;
}
.prop-cell {
    display: flex;
    flex-direction: column;
    align-items: center;
    width: 64px;
    margin-right: 15px;
    gap: 6px;
    white-space: nowrap;
}
.prop-cell:last-child {
    margin-right: 0;
}
.prop-cell input {
    width: 43px;
    height: 27px;
}
.prop-type + .prop-grid {
    height: 85px;
}
.prop-line {
    height: 157px;
    align-content: flex-start;
}
.prop-line > .prop-cell {
    margin-right: 10px;
}
.prop-line > .narrow {
    width: 40px;
    margin-right: 0;
}
.line-more {
    display: flex;
    width: 100%;
    justify-content: flex-end;
    margin-top: 24px;
    gap: 17px;
}
.line-more .prop-cell {
    width: auto;
    margin: 0 7px;
    gap: 10px;
}
.line-more .prop-cell:last-child {
    margin: 0 -2px 0 6px;
}
.prop-margin {
    display: flex;
    align-items: flex-start;
    gap: 10px;
    padding-top: 15px;
}
.prop-margin .prop-title {
    width: 124px;
    padding-top: 2px;
}
.prop-margin input {
    width: 42px;
}
```
